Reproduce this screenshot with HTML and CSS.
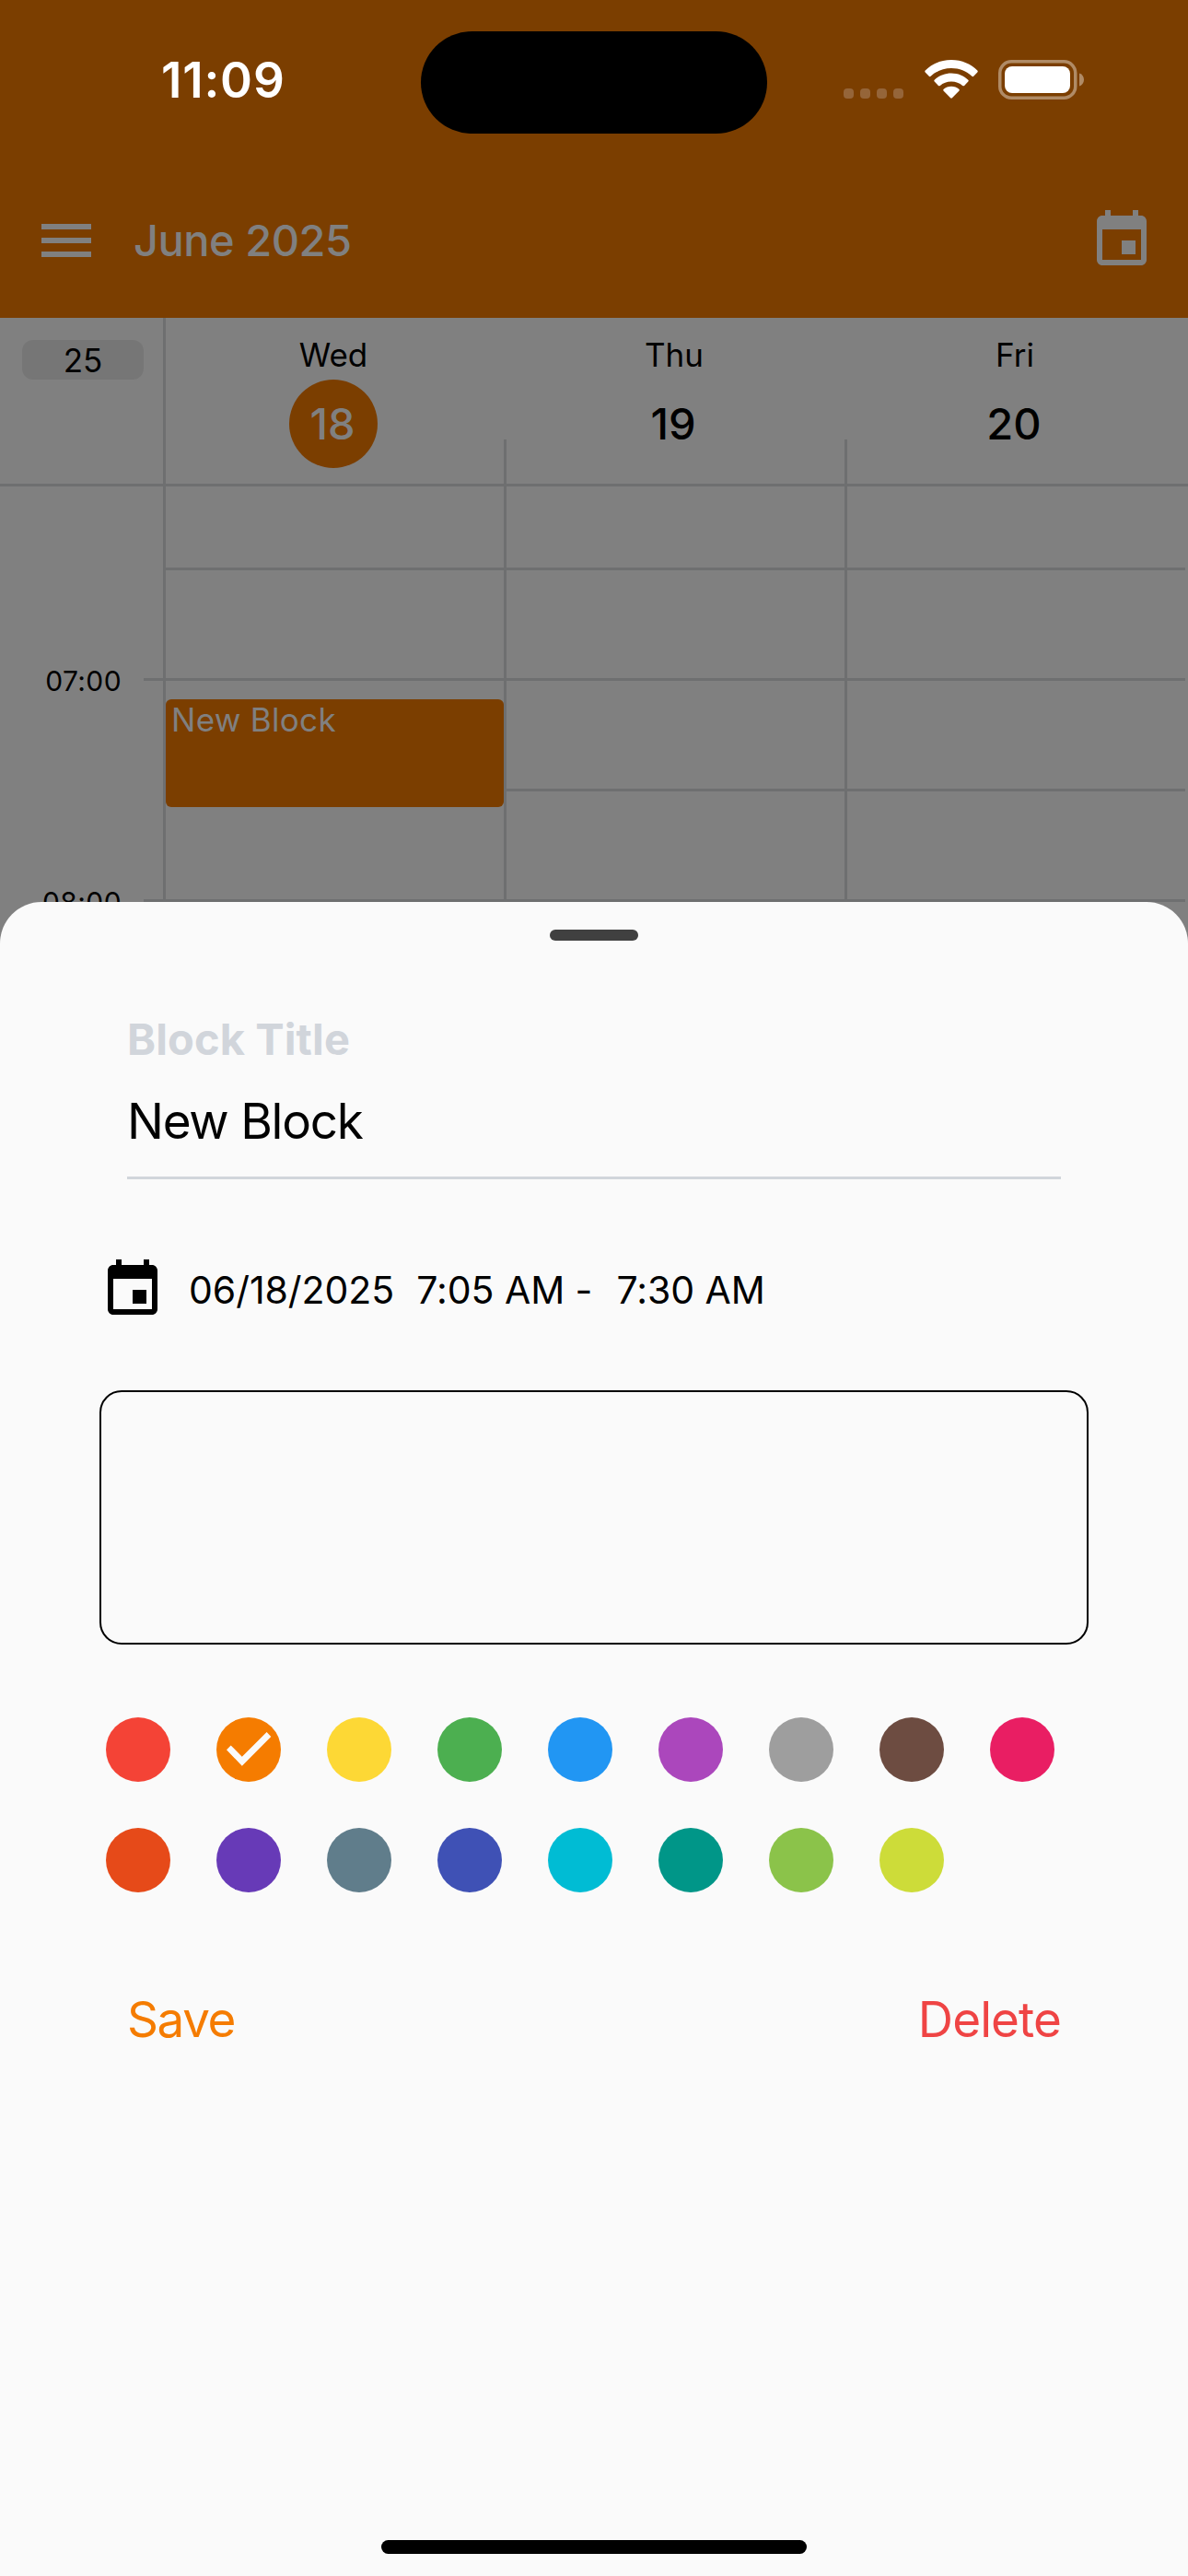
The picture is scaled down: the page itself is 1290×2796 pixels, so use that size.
FILE: index.html
```html
<!DOCTYPE html>
<html lang="en">
<head>
<meta charset="utf-8">
<title>June 2025</title>
<link rel="stylesheet" href="styles.css">
</head>
<body>
<svg class="sprite" aria-hidden="true">
  <symbol id="event" viewBox="0 0 24 24">
    <path d="M17 12h-5v5h5v-5zM16 1v2H8V1H6v2H5c-1.11 0-1.99.9-1.99 2L3 19c0 1.1.89 2 2 2h14c1.1 0 2-.9 2-2V5c0-1.1-.9-2-2-2h-1V1h-2zm3 18H5V8h14v11z"/>
  </symbol>
</svg>
<div class="screen">
  <header class="top">
    <div class="status">
      <span class="clock">11:09</span>
      <div class="island"></div>
      <div class="indicators">
        <div class="signal"><i></i><i></i><i></i><i></i></div>
        <svg class="wifi" viewBox="0 0 58 42">
          <path d="M29 0C40.500 0 50.500 4.600 57.300 11.600Q58.200 12.600 57.300 13.500L53.200 17.800Q52.300 18.600 51.400 17.700C45.500 12.200 37.700 9 29 9S12.500 12.200 6.600 17.700Q5.700 18.600 4.800 17.800L.7 13.500Q-.2 12.600 .7 11.600C7.500 4.600 17.500 0 29 0z"/>
          <path d="M29 14.400C36.300 14.400 42.800 17.200 47.300 21.700Q48.200 22.600 47.300 23.500L43.100 27.900Q42.200 28.800 41.200 27.900C38 25 33.700 23.400 29 23.400S20 25 16.800 27.900Q15.800 28.800 14.900 27.900L10.700 23.500Q9.800 22.600 10.700 21.700C15.200 17.200 21.700 14.400 29 14.400z"/>
          <path d="M29 28.700C32.300 28.700 35.200 29.900 37.300 31.800Q38.300 32.700 37.300 33.700L29.900 41.300Q29 42.200 28.100 41.300L20.700 33.700Q19.700 32.700 20.700 31.800C22.800 29.900 25.700 28.700 29 28.700z"/>
        </svg>
        <svg class="battery" viewBox="0 0 93 43">
          <rect class="shell" x="1.750" y="1.750" width="82" height="39.500" rx="12.500"/>
          <rect class="charge" x="7" y="7" width="71" height="29" rx="8"/>
          <path class="nub" d="M88 14.500C91.200 15.500 93 18.300 93 21.500S91.200 27.500 88 28.500z"/>
        </svg>
      </div>
    </div>
    <div class="appbar">
      <div class="menu"><i></i><i></i><i></i></div>
      <h1 class="month">June 2025</h1>
      <svg class="icon"><use href="#event"/></svg>
    </div>
  </header>

  <main class="calendar">
    <div class="days">
      <div class="week"><span class="week-number">25</span></div>
      <div class="day"><span class="name">Wed</span><span class="date today">18</span></div>
      <div class="day short"><span class="name">Thu</span><span class="date">19</span></div>
      <div class="day short"><span class="name">Fri</span><span class="date">20</span></div>
    </div>
    <div class="slot first">
      <div class="gutter"></div><div class="cell"></div><div class="cell"></div><div class="cell"></div>
    </div>
    <div class="slot">
      <div class="gutter tick"></div><div class="cell"></div><div class="cell"></div><div class="cell"></div>
    </div>
    <div class="slot">
      <div class="gutter"><span class="hour">07:00</span></div>
      <div class="cell"><div class="event">New Block</div></div><div class="cell"></div><div class="cell"></div>
    </div>
    <div class="slot">
      <div class="gutter tick"></div><div class="cell"></div><div class="cell"></div><div class="cell"></div>
    </div>
    <div class="slot">
      <div class="gutter"><span class="hour">08:00</span></div><div class="cell"></div><div class="cell"></div><div class="cell"></div>
    </div>
  </main>

  <section class="sheet">
    <div class="handle"></div>
    <div class="field">
      <label class="label">Block Title</label>
      <div class="value">New Block</div>
    </div>
    <div class="when">
      <svg class="icon"><use href="#event"/></svg>
      <span class="range"><span class="start-date">06/18/2025</span><span class="start">7:05 AM -</span><span class="end">7:30 AM</span></span>
    </div>
    <div class="notes"></div>
    <div class="swatches">
      <i class="red"></i>
      <i class="orange"><svg viewBox="0 0 70 70"><path d="M11 35.300L15.700 30.400L27.800 42.700L54.600 16L59.300 20.900L27.800 52.700z"/></svg></i>
      <i class="yellow"></i><i class="green"></i><i class="blue"></i><i class="purple"></i><i class="gray"></i><i class="brown"></i><i class="pink"></i>
      <i class="deep-orange"></i><i class="deep-purple"></i><i class="blue-gray"></i><i class="indigo"></i><i class="cyan"></i><i class="teal"></i><i class="light-green"></i><i class="lime"></i>
    </div>
    <div class="actions">
      <span class="save">Save</span>
      <span class="delete">Delete</span>
    </div>
    <div class="home"></div>
  </section>
</div>
</body>
</html>
```
FILE: styles.css
```css
* { box-sizing: border-box; }
body {
  margin: 0;
  font-family: Inter, "Liberation Sans", sans-serif;
  color: #000;
}
i { display: block; }
.sprite { display: none; }
.screen {
  position: relative;
  width: 1290px;
  height: 2796px;
  overflow: hidden;
  background: #808080;
}

/* Status bar and app bar */
.top { height: 345px; background: #7b3e00; }
.status {
  display: grid;
  grid-template-columns: 457px 376px 1fr;
  height: 180px;
  padding-top: 33px;
}
.clock {
  padding-left: 175px;
  font-size: 53px;
  font-weight: 600;
  line-height: 109px;
  letter-spacing: 0.8px;
  color: #fff;
}
.island { height: 111px; margin-top: 0.5px; border-radius: 56px; background: #000; }
.indicators { display: flex; height: 43px; margin: 32px 0 0 83px; }
.signal { display: flex; gap: 7px; margin: 31px 23px 0 0; }
.signal i { width: 11px; height: 11px; border-radius: 4px; background: #956539; }
.wifi { width: 58px; height: 42px; margin-right: 22px; fill: #fff; }
.battery { width: 93px; height: 43px; }
.shell { fill: none; stroke: #b08b66; stroke-width: 3.5; }
.charge { fill: #fff; }
.nub { fill: #b08b66; }
.appbar { display: flex; align-items: center; height: 162px; padding: 0 36px 0 45px; color: #808080; }
.menu { display: flex; flex-direction: column; gap: 9px; width: 54px; }
.menu i { height: 6px; background: currentColor; }
.month {
  flex: 1;
  margin: 0 0 0 46px;
  font-size: 47px;
  font-weight: 500;
  line-height: 60px;
  letter-spacing: -0.5px;
}
.icon { width: 72px; height: 72px; fill: currentColor; }

/* Calendar */
.days, .slot { display: grid; grid-template-columns: 177px 370px 370px 370px; }
.days { height: 183px; border-bottom: 3px solid #6e6f70; }
.week { padding: 24px 21px 0 24px; }
.week-number {
  display: block;
  height: 43px;
  border-radius: 12px;
  background: #767676;
  font-size: 35px;
  line-height: 44px;
  text-align: center;
}
.day {
  display: flex;
  flex-direction: column;
  align-items: center;
  padding: 18px 3px 0 0;
  border-left: 3px solid #6e6f70;
}
.day.short {
  border-left-color: transparent;
  border-image: linear-gradient(transparent 132px, #6e6f70 132px) 1;
  border-width: 0 0 0 3px;
}
.name { height: 49px; font-size: 35px; line-height: 44px; }
.date {
  width: 96px;
  height: 96px;
  border-radius: 50%;
  font-size: 47px;
  font-weight: 500;
  line-height: 96px;
  text-align: center;
  text-indent: -2px;
}
.today { background: #7b3e00; color: #808080; }
.slot { height: 120px; }
.slot.first { height: 91px; }
.cell { position: relative; border-left: 3px solid #6e6f70; border-bottom: 3px solid #6e6f70; }
.gutter { padding-right: 45px; text-align: right; }
.tick { background: linear-gradient(#6e6f70, #6e6f70) right bottom / 21px 3px no-repeat; }
.hour { display: block; margin-top: -18px; font-size: 30px; line-height: 36px; letter-spacing: 0.4px; }
.event {
  position: absolute;
  z-index: 1;
  top: 20px;
  left: 0;
  width: 367px;
  height: 117px;
  padding: 0 6px;
  border-radius: 6px;
  background: #7b3e00;
  color: #808080;
  font-size: 35px;
  line-height: 44px;
  letter-spacing: 0.3px;
}

/* Edit sheet */
.sheet {
  position: absolute;
  z-index: 2;
  top: 979px;
  left: 0;
  right: 0;
  bottom: 0;
  display: flex;
  flex-direction: column;
  padding: 30px 108px 24px;
  border-radius: 45px 45px 0 0;
  background: #fafafa;
}
.handle { align-self: center; width: 96px; height: 12px; border-radius: 6px; background: #404040; }
.field { margin: 77px 30px 0; height: 182px; border-bottom: 3px solid #d1d5db; }
.label {
  display: block;
  height: 83px;
  font-size: 47px;
  font-weight: 700;
  line-height: 59px;
  letter-spacing: 0.1px;
  color: #d1d5db;
}
.value { font-size: 53px; line-height: 72px; letter-spacing: -1.25px; }
.when { display: flex; align-items: center; height: 72px; margin-top: 84px; }
.range { display: flex; margin-left: 25px; font-size: 41px; letter-spacing: -0.05px; }
.start { margin-left: 24px; }
.end { margin-left: 26px; }
.notes { height: 276px; margin-top: 73px; border: 2px solid #000; border-radius: 24px; }
.swatches {
  display: grid;
  grid-template-columns: repeat(9, 70px);
  gap: 50px;
  margin: 79px 0 0 7px;
}
.swatches i { height: 70px; border-radius: 50%; }
.swatches svg { display: block; width: 70px; height: 70px; fill: #fafafa; }
.red { background: #f44336; }
.orange { background: #f57c00; }
.yellow { background: #fdd835; }
.green { background: #4caf50; }
.blue { background: #2196f3; }
.purple { background: #ab47bc; }
.gray { background: #9e9e9e; }
.brown { background: #6d4c41; }
.pink { background: #e91e63; }
.deep-orange { background: #e64a19; }
.deep-purple { background: #673ab7; }
.blue-gray { background: #607d8b; }
.indigo { background: #3f51b5; }
.cyan { background: #00bcd4; }
.teal { background: #009688; }
.light-green { background: #8bc34a; }
.lime { background: #cddc39; }
.actions { display: flex; justify-content: space-between; margin: 103px 30px 0; font-size: 53px; line-height: 71px; }
.save { color: #f57c00; letter-spacing: -1.4px; }
.delete { color: #ef4444; letter-spacing: -0.9px; }
.home { align-self: center; width: 462px; height: 15px; margin-top: auto; border-radius: 8px; background: #000; }
```
